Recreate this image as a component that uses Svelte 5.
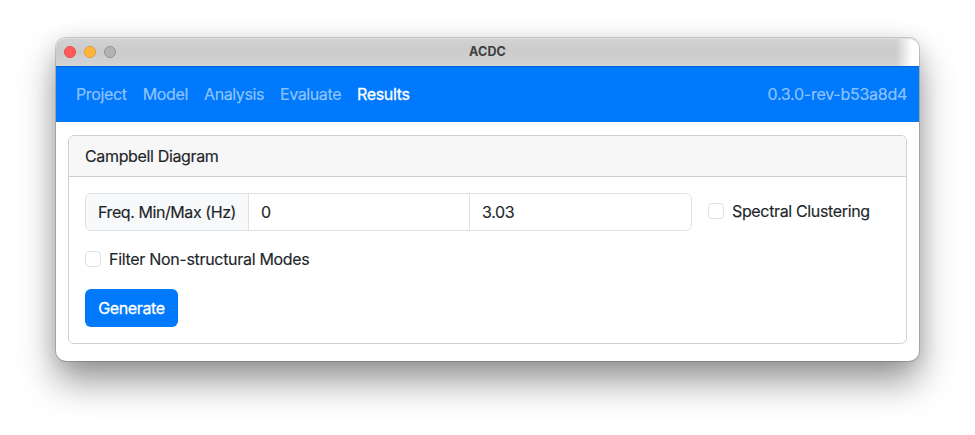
<script>
  const links = ['Project', 'Model', 'Analysis', 'Evaluate', 'Results'];
  let active = $state('Results');
  let min = $state('0');
  let max = $state('3.03');
  let spectral = $state(false);
  let filter = $state(false);
</script>

<main>
  <div class="window">
    <header class="titlebar">
      <div class="lights">
        <span class="light close"></span>
        <span class="light minimize"></span>
        <span class="light zoom"></span>
      </div>
      <span class="title">ACDC</span>
    </header>
    <nav>
      <div class="links">
        {#each links as link}
          <button class="link {link.toLowerCase()}" class:active={active === link} onclick={() => (active = link)}>{link}</button>
        {/each}
      </div>
      <span class="version">0.3.0-rev-b53a8d4</span>
    </nav>
    <section class="card">
      <div class="card-header"><span>Campbell Diagram</span></div>
      <div class="card-body">
        <div class="row">
          <div class="group">
            <span class="prefix"><span class="freq">Freq. Min/Max (Hz)</span></span>
            <input class="field" type="text" aria-label="Minimum frequency" bind:value={min} />
            <input class="field" type="text" aria-label="Maximum frequency" bind:value={max} />
          </div>
          <label class="check"><input type="checkbox" bind:checked={spectral} /><span class="spectral">Spectral Clustering</span></label>
        </div>
        <label class="check filter"><input type="checkbox" bind:checked={filter} /><span class="modes">Filter Non-structural Modes</span></label>
        <button class="generate">Generate</button>
      </div>
    </section>
  </div>
</main>

<style>
  :global(body) { margin: 0; background: #fff; }
  main {
    box-sizing: border-box;
    width: 975px;
    height: 435px;
    padding: 38px 56px 0;
    overflow: hidden;
    font: 16px/24px Inter, "Liberation Sans", sans-serif;
    letter-spacing: -0.35px;
    color: #212529;
    -webkit-text-stroke: 0.15px;
  }
  .window {
    height: 323px;
    border-radius: 10px;
    background: #fff;
    box-shadow: 0 0 0 1px rgba(0, 0, 0, 0.16), 0 20px 36px rgba(0, 0, 0, 0.41), 0 2px 20px rgba(0, 0, 0, 0.1);
  }
  .titlebar {
    box-sizing: border-box;
    height: 28px;
    display: grid;
    grid-template-columns: 1fr auto 1fr;
    align-items: center;
    padding: 0 8px 1px;
    border-top: 1px solid #dedede;
    border-radius: 10px 10px 0 0;
    background: linear-gradient(90deg, transparent 840px, #fff 856px), linear-gradient(#d2d2d2, #cbcbcb 45%, #d4d4d4);
  }
  .lights { display: flex; gap: 8px; }
  .light { box-sizing: border-box; width: 12px; height: 12px; border-radius: 50%; border: 1px solid; }
  .close { background: #ff5b5a; border-color: #e9484b; }
  .minimize { background: #ffb53c; border-color: #e49b35; }
  .zoom { background: #b2b2b2; border-color: #969696; }
  .title { font-size: 12.5px; font-weight: 700; line-height: 16px; letter-spacing: 0.2px; color: #3e3e3e; -webkit-text-stroke: 0; }
  nav {
    box-sizing: border-box;
    height: 56px;
    display: flex;
    align-items: center;
    justify-content: space-between;
    padding: 0 12px 1px;
    border-top: 1px solid #0062d6;
    background: #0079fc;
  }
  .links { display: flex; }
  button { font: inherit; letter-spacing: inherit; border: 0; cursor: pointer; }
  .link { padding: 8px; background: none; color: rgba(255, 255, 255, 0.55); white-space: nowrap; -webkit-text-stroke: 0.15px; }
  .link.active { color: #fff; -webkit-text-stroke: 0.3px; }
  .analysis, .evaluate { letter-spacing: -0.4px; }
  .version { color: rgba(255, 255, 255, 0.55); letter-spacing: -0.26px; }
  .card {
    box-sizing: border-box;
    height: 209px;
    margin: 13px 12px 0;
    border: 1px solid #d0d0d0;
    border-radius: 6px;
  }
  .card-header {
    box-sizing: border-box;
    height: 41px;
    padding: 8px 16px;
    border-bottom: 1px solid #cdcdcd;
    border-radius: 5px 5px 0 0;
    background: #f7f7f7;
  }
  .card-body { display: flex; flex-direction: column; align-items: flex-start; padding: 16px; }
  .row { display: flex; gap: 16px; }
  .group {
    box-sizing: border-box;
    display: flex;
    width: 607px;
    height: 38px;
    border: 1px solid #dee2e6;
    border-radius: 6px;
    overflow: hidden;
  }
  .prefix { box-sizing: border-box; width: 162px; padding: 6px 12px; background: #f8f9fa; white-space: nowrap; letter-spacing: -0.42px; }
  .field {
    box-sizing: border-box;
    width: 221px;
    min-width: 0;
    padding: 0 12px;
    border: 0;
    border-left: 1px solid #dee2e6;
    outline: 0;
    background: #fff;
    color: inherit;
    font: inherit;
    letter-spacing: inherit;
  }
  .field:last-child { flex: 1; }
  .check { display: flex; align-items: center; gap: 8px; height: 24px; margin-top: 6px; white-space: nowrap; }
  .check input { appearance: none; box-sizing: border-box; width: 16px; height: 16px; margin: 0; border: 1px solid #dee2e6; border-radius: 4px; background: #fff; }
  .check input:checked { background: #0079fc; }
  .filter { margin-top: 16px; letter-spacing: -0.31px; }
  .generate { width: 93px; height: 38px; margin-top: 18px; padding: 0; border-radius: 6px; background: #0079fc; color: #fff; -webkit-text-stroke: 0.3px; }
</style>
